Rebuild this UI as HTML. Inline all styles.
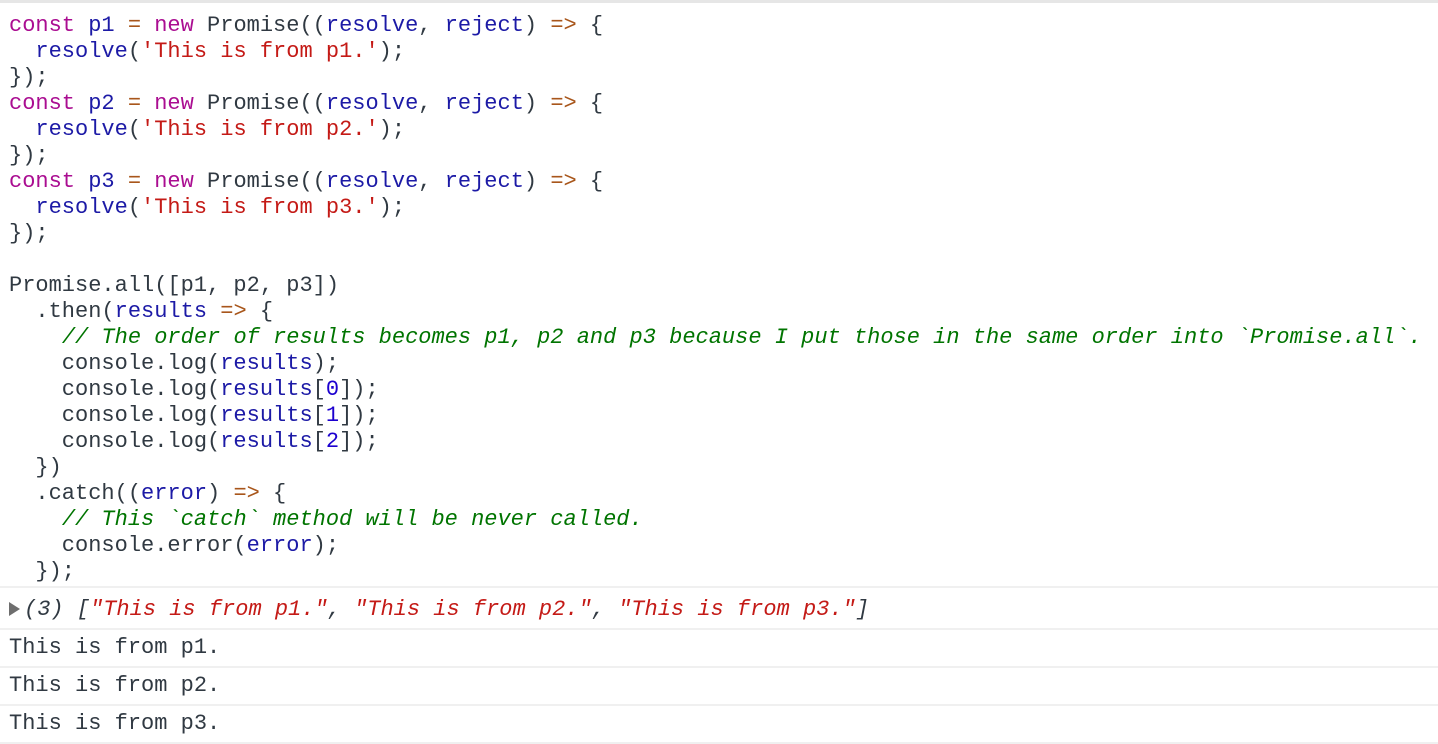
<!DOCTYPE html>
<html><head><meta charset="utf-8"><style>
body{margin:0;width:1438px;height:744px;background:#fff;overflow:hidden;font-family:"Liberation Mono","DejaVu Sans Mono",monospace;font-size:22px;color:#303942;}
.top{height:3px;background:#e6e6e6;}
pre{margin:0;padding:10px 0 0 9px;font:inherit;line-height:26px;height:583px;box-sizing:border-box;}
.k{color:#aa0d91}.v{color:#1c1aa6}.s{color:#c41a16}.o{color:#a8561b}.c{color:#007400;font-style:italic}.n{color:#1c00cf}
.row{border-top:2px solid #f0f0f0;height:36px;line-height:36px;padding-left:9px;white-space:pre;}
.arr{display:inline-block;width:0;height:0;border-left:11px solid #6e6e6e;border-top:7px solid transparent;border-bottom:7px solid transparent;margin-right:4px;vertical-align:-1px}
.i{font-style:italic}
</style></head><body>
<div class="top"></div>
<pre><span class="k">const</span> <span class="v">p1</span> <span class="o">=</span> <span class="k">new</span> Promise((<span class="v">resolve</span>, <span class="v">reject</span>) <span class="o">=&gt;</span> {
  <span class="v">resolve</span>(<span class="s">'This is from p1.'</span>);
});
<span class="k">const</span> <span class="v">p2</span> <span class="o">=</span> <span class="k">new</span> Promise((<span class="v">resolve</span>, <span class="v">reject</span>) <span class="o">=&gt;</span> {
  <span class="v">resolve</span>(<span class="s">'This is from p2.'</span>);
});
<span class="k">const</span> <span class="v">p3</span> <span class="o">=</span> <span class="k">new</span> Promise((<span class="v">resolve</span>, <span class="v">reject</span>) <span class="o">=&gt;</span> {
  <span class="v">resolve</span>(<span class="s">'This is from p3.'</span>);
});

Promise.all([p1, p2, p3])
  .then(<span class="v">results</span> <span class="o">=&gt;</span> {
    <span class="c">// The order of results becomes p1, p2 and p3 because I put those in the same order into `Promise.all`.</span>
    console.log(<span class="v">results</span>);
    console.log(<span class="v">results</span>[<span class="n">0</span>]);
    console.log(<span class="v">results</span>[<span class="n">1</span>]);
    console.log(<span class="v">results</span>[<span class="n">2</span>]);
  })
  .catch((<span class="v">error</span>) <span class="o">=&gt;</span> {
    <span class="c">// This `catch` method will be never called.</span>
    console.error(<span class="v">error</span>);
  });</pre>
<div class="row" style="height:40px;line-height:44px"><span class="arr"></span><span class="i">(3) [<span class="s">"This is from p1."</span>, <span class="s">"This is from p2."</span>, <span class="s">"This is from p3."</span>]</span></div>
<div class="row">This is from p1.</div>
<div class="row">This is from p2.</div>
<div class="row">This is from p3.</div>
<div style="border-top:2px solid #f0f0f0"></div>
</body></html>
